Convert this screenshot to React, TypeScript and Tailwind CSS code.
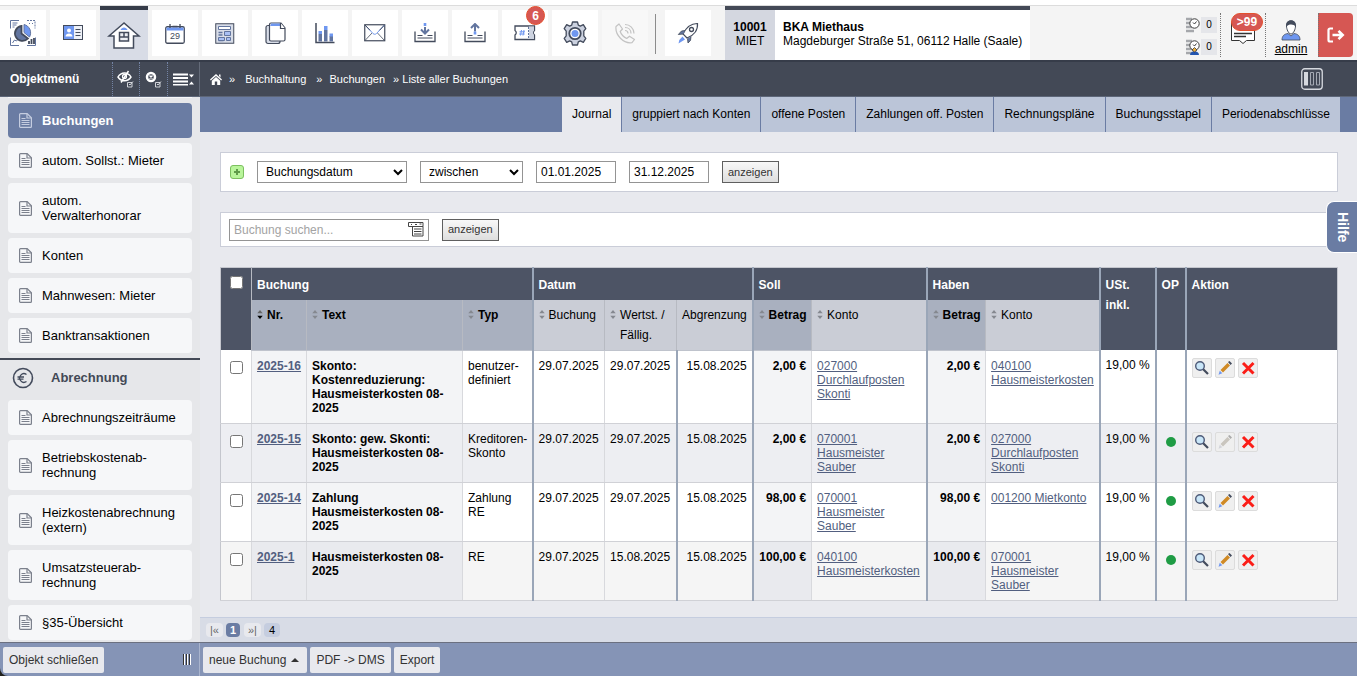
import type { ReactNode } from 'react';
import clsx from 'clsx';

const INK = '#434b5c';
const BLUE = '#6f97f0';
const STEEL = '#62759f';

/* ---------- Toolbar icons ---------- */

function DashboardIcon() {
  return (
    <svg width="26" height="26" viewBox="0 0 26 26" fill="none" stroke={STEEL} strokeWidth="1">
      <path d="M9 .5H.5v8M2.500 3h5M2.500 5h4M2.500 7h2" />
      <path d="M17 .5h8v8" strokeDasharray="2 1" />
      <path d="M19 3.500h1M22 3.500h1" />
      <path d="M.5 17.500v8H9M2.500 23l2-3 2 1 2-2.500" />
      <path d="M25.500 17.500v8H17" />
      <path d="M19 24v-3M21.500 24v-5M24 24v-6" stroke={INK} strokeWidth="1.800" />
      <path d="M11.500 6a7.500 7.500 0 1 0 6.500 12.500l-6.500-5z" fill={STEEL} stroke={INK} strokeWidth="1.800" />
      <path d="M14 4.500a8.500 8.500 0 0 1 5.500 12.500L14 12.500z" fill={BLUE} stroke={STEEL} />
    </svg>
  );
}

function CardIcon() {
  return (
    <svg width="20" height="16" viewBox="0 0 20 16" fill="none">
      <rect x=".5" y=".5" width="19" height="14" fill="#eef1f7" stroke={INK} />
      <rect x="1" y="1" width="10" height="13" fill={BLUE} />
      <circle cx="6" cy="5.500" r="2" fill="#fff" />
      <path d="M2.500 11.500c0-4 7-4 7 0z" fill="#fff" />
      <path d="M12.500 4.500h5M12.500 7.500h5M12.500 10.500h5" stroke={INK} />
    </svg>
  );
}

function HouseIcon() {
  return (
    <svg width="34" height="28" viewBox="0 0 34 28" fill="none" stroke={INK} strokeWidth="1.500">
      <path d="M17 2L2 15h5v12h19.500V15H32z" fill="#fff" />
      <path d="M13.500 9c1-3.500 6-3.500 7 0z" fill={BLUE} stroke="none" />
      <path d="M12.500 11.500h9v8.500h-9zM17 11.500V16M12.500 16h9" fill="#eceef4" />
    </svg>
  );
}

function CalendarIcon() {
  return (
    <svg width="20" height="21" viewBox="0 0 20 21" fill="none">
      <rect x=".75" y="3.750" width="18.500" height="16.500" rx="1.500" fill="#fff" stroke={INK} strokeWidth="1.300" />
      <path d="M1.500 4.500h17v3h-17z" fill={BLUE} />
      <path d="M5 1v4M15 1v4M7.500 3.500h5" stroke={INK} strokeWidth="1.300" />
      <text x="10" y="16" textAnchor="middle" fontSize="9" fill={INK} fontFamily="Liberation Sans, sans-serif">29</text>
    </svg>
  );
}

function FormIcon() {
  return (
    <svg width="20" height="21" viewBox="0 0 20 21" fill="none" stroke={STEEL}>
      <rect x=".75" y=".75" width="18" height="19.500" fill="#d8dde8" stroke={INK} />
      <path d="M3.500 3.500h12v3h-12z" fill="#fff" />
      <path d="M3.500 9.500h4M3.500 12h4M3.500 17.500h5" strokeWidth="1.500" />
      <path d="M9.500 8.500h6v4h-6zM3.500 14.500h6v3h-6zM11.500 14.500h4v3h-4z" fill="#a9c0f4" />
    </svg>
  );
}

function CopyIcon() {
  return (
    <svg width="21" height="23" viewBox="0 0 21 23" fill="none" stroke={INK} strokeWidth="1.200">
      <rect x="1" y="3.500" width="14" height="18" rx="2" fill="#d8dde8" />
      <path d="M6 1h10l4 5v11.500a1.500 1.500 0 0 1-1.500 1.500H6a1.500 1.500 0 0 1-1.500-1.500V2.500A1.500 1.500 0 0 1 6 1z" fill="#fff" />
      <path d="M6 1.500h9v2.500H5.200z" fill={BLUE} stroke="none" />
      <path d="M15.500 1v5.500h4.500" fill="#fff" />
    </svg>
  );
}

function ChartIcon() {
  return (
    <svg width="20" height="21" viewBox="0 0 20 21" fill="none">
      <path d="M1 0v19.500h18.500" stroke={INK} strokeWidth="1.500" />
      <path d="M3.500 11h3.500v7.500H3.500zM9 7h3.500v11.500H9zM14.500 13H18v5.500h-3.500z" fill={STEEL} />
      <path d="M3.500 8h3.500v3H3.500zM9 3h3.500v4H9zM14.500 10.500H18v3h-3.500z" fill={BLUE} />
    </svg>
  );
}

function MailIcon() {
  return (
    <svg width="22" height="18" viewBox="0 0 22 18" fill="none" stroke={INK}>
      <rect x=".75" y=".75" width="20" height="16" fill="#fff" strokeWidth="1.200" />
      <path d="M1 16.500l7-7.500M20.500 16.500L13.500 9" strokeWidth=".8" />
      <path d="M1 1l8 8.500c1 1 2.500 1 3.500 0L20.500 1" stroke={BLUE} />
      <path d="M1 1l5 5.300M20.500 1l-5 5.300" />
    </svg>
  );
}

function TrayIcon({ up }: { up?: boolean }) {
  return (
    <svg width="22" height="20" viewBox="0 0 22 20" fill="none">
      <path d="M1 8.500v10h20v-10" stroke={INK} strokeWidth="1.300" />
      <path d="M3.500 12.500h5M13.500 12.500h5M3.500 15h15" stroke={INK} />
      {up ? (
        <>
          <path d="M11 8.500V1.500M7 5l4-4 4 4" stroke={STEEL} strokeWidth="2" />
          <path d="M9.700 8.500h2.600v3H9.700z" fill={BLUE} />
        </>
      ) : (
        <>
          <path d="M11 4v6M7 6.500l4 4 4-4" stroke={STEEL} strokeWidth="2" />
          <path d="M9.700 0h2.600v3H9.700z" fill={BLUE} />
        </>
      )}
    </svg>
  );
}

function TicketIcon() {
  return (
    <svg width="22" height="16" viewBox="0 0 22 16" fill="none">
      <path d="M1 1h19.500v4.500q-2.500 2 0 4.500v4.500H1V10q2.500-2.500 0-4.500z" fill="#fff" stroke={INK} strokeWidth="1.300" />
      <path d="M15 1.500h5v4q-2 2 0 4.500v4h-5z" fill="#cdd3e0" />
      <path d="M14.500 2v12" stroke={STEEL} strokeDasharray="2 1" />
      <path d="M7.500 5l-1 5.500M10 5L9 10.500M5.500 6.800H11M5.200 9h5.500" stroke={BLUE} />
    </svg>
  );
}

function GearIcon() {
  return (
    <svg width="24" height="25" viewBox="0 0 24 25" fill="none" stroke={INK}>
      <path
        d="M9.500 1h5l.8 3.200 2 .9 3-1.400 2.500 4-2 2.500v4.600l2 2.500-2.500 4-3-1.400-2 .9-.8 3.200h-5l-.8-3.200-2-.9-3 1.400-2.500-4 2-2.500v-4.600l-2-2.500 2.500-4 3 1.400 2-.9z"
        fill="#cbd1df"
        strokeWidth="1.300"
        strokeLinejoin="round"
      />
      <circle cx="12" cy="12.500" r="5.700" fill="#fff" strokeWidth="1.800" />
      <circle cx="12" cy="12.500" r="3.500" fill={BLUE} stroke="none" />
    </svg>
  );
}

function PhoneIcon() {
  return (
    <svg width="21" height="21" viewBox="0 0 21 21" fill="none" stroke="#c3c3c3" strokeWidth="1.200">
      <path d="M1 3.500L4 1l3.500 5-2.300 2.500c1 3 3.500 5.500 6.500 7l2.800-2.300 5 3.300-2.500 3.200C8.500 21 0 12 1 3.500z" strokeLinejoin="round" />
      <path d="M10 1.500c5 0 9 4 9 9M10 4.500c3.500 0 6 2.500 6 6M10 7.500c2 0 3 1 3 3" />
    </svg>
  );
}

function RocketIcon() {
  return (
    <svg width="22" height="23" viewBox="0 0 22 23" fill="none" stroke={INK}>
      <path d="M20.500 1.500c-6-.2-10.500 2.500-14.500 10.500l4 4C17 13.500 21 8 20.500 1.500z" fill="#fff" strokeWidth="1.200" />
      <path d="M8 8.500L4.500 9 1.300 12.500l5-.5M14 14.500l-.5 4-2.500 2.500-.5-4.500" fill={STEEL} strokeWidth=".8" />
      <circle cx="14.500" cy="7.500" r="2" strokeWidth="1.300" />
      <path d="M5.500 14.500l2.500 3-2.500 1.500-4 2.500.8-3.500z" fill={BLUE} stroke="none" />
    </svg>
  );
}

function ClockIcon({ user }: { user?: boolean }) {
  return (
    <svg width="14" height="16" viewBox="0 0 14 16" fill="none" stroke="#3a3a3a">
      <path d="M0 2h6M0 6h5M0 10h6M0 14h8" stroke="#a5a7ab" strokeWidth="2.500" />
      <circle cx="8.500" cy="6.500" r="4.700" fill="#fff" />
      <path d="M8.500 7l2-2.500M8.500 7L7 5.500" />
      {user && (
        <>
          <path d="M4 16c0-5 9-5 9 0z" fill="#2456b0" stroke="none" />
          <path d="M6 11l2.500-2.500L11 11l-2.500 2z" fill="#f0b13c" strokeWidth=".8" />
        </>
      )}
    </svg>
  );
}

function UserIcon() {
  return (
    <svg width="20" height="21" viewBox="0 0 20 21" fill="none">
      <path d="M1 20c0-4 2-6 6-6.500l3 2.500 3-2.500c4 .5 6 2.500 6 6.500z" fill={BLUE} stroke={INK} strokeWidth=".8" />
      <path d="M5.500 6c0-3 2-5 4.500-5s4.500 2 4.500 5-2 8-4.500 8-4.500-5-4.500-8z" fill="#fff" stroke={INK} />
      <path d="M5.300 6.500C4.500 2.500 7 .3 10 .3s5.500 2.200 4.700 6.200C13 4 8 3.500 5.300 6.500z" fill={INK} />
    </svg>
  );
}

/* ---------- Small icons ---------- */

function DocIcon({ className }: { className?: string }) {
  return (
    <svg width="13" height="15" viewBox="0 0 13 15" fill="none" stroke="currentColor" className={clsx('shrink-0', className)}>
      <path d="M1.500.6h6.700l4.200 4.200v8.700a.9.900 0 0 1-.9.900h-10a.9.900 0 0 1-.9-.9V1.500a.9.900 0 0 1 .9-.9z" strokeWidth="1.200" />
      <path d="M8 1v4h4" strokeWidth="1.200" />
      <path d="M2.500 5.500h4M2.500 7.500h8M2.500 9.500h8M2.500 11.500h8" strokeWidth="1.200" />
    </svg>
  );
}

function SortIcon({ active }: { active?: boolean }) {
  return (
    <svg width="6" height="9" viewBox="0 0 6 9" className="mt-[5px] shrink-0">
      <path d="M3 0l2.700 3.200H.3z" fill={active ? '#666' : '#85888f'} />
      <path d="M3 9L.3 5.800h5.400z" fill={active ? '#000' : '#85888f'} />
    </svg>
  );
}

function SearchIcon() {
  return (
    <svg width="16" height="16" viewBox="0 0 16 16" fill="none">
      <path d="M8.500 8.500l5.500 5.500" stroke={INK} strokeWidth="2.200" />
      <circle cx="6" cy="6" r="4.300" fill="#c9e6f8" stroke="#4d5a78" strokeWidth="1.400" />
    </svg>
  );
}

function PencilIcon({ off }: { off?: boolean }) {
  return (
    <svg width="16" height="16" viewBox="0 0 16 16">
      <path d="M10.500 3l2.500 2.500-7 7L3.500 10z" fill={off ? '#c9c5be' : '#d08a25'} />
      <path d="M11 2l1.500-1 2.500 2.500-1.500 1.500z" fill={off ? '#aaa' : INK} />
      <path d="M2.800 10.700l2.500 2.500-3.800 1.500z" fill={off ? '#d2d4da' : BLUE} />
    </svg>
  );
}

function DeleteIcon() {
  return (
    <svg width="16" height="16" viewBox="0 0 16 16" stroke="#fb1d17" strokeWidth="3">
      <path d="M3 3l10.500 10.500M13.500 3L3 13.500" />
    </svg>
  );
}

/* ---------- Data ---------- */

const tools: { label: string; icon: ReactNode; active?: boolean; badge?: string; off?: boolean }[] = [
  { label: 'Übersicht', icon: <DashboardIcon /> },
  { label: 'Kontakte', icon: <CardIcon /> },
  { label: 'Objekte', icon: <HouseIcon />, active: true },
  { label: 'Kalender', icon: <CalendarIcon /> },
  { label: 'Formulare', icon: <FormIcon /> },
  { label: 'Dokumente', icon: <CopyIcon /> },
  { label: 'Auswertungen', icon: <ChartIcon /> },
  { label: 'E-Mail', icon: <MailIcon /> },
  { label: 'Eingang', icon: <TrayIcon /> },
  { label: 'Ausgang', icon: <TrayIcon up /> },
  { label: 'Tickets', icon: <TicketIcon />, badge: '6' },
  { label: 'Einstellungen', icon: <GearIcon /> },
  { label: 'Telefon', icon: <PhoneIcon />, off: true },
];

const bookingMenu = [
  'Buchungen',
  'autom. Sollst.: Mieter',
  'autom. Verwalterhonorar',
  'Konten',
  'Mahnwesen: Mieter',
  'Banktransaktionen',
];

const billingMenu = [
  'Abrechnungszeiträume',
  'Betriebskostenab-rechnung',
  'Heizkostenabrechnung (extern)',
  'Umsatzsteuerab-rechnung',
  '§35-Übersicht',
];

const tabs = [
  'Journal',
  'gruppiert nach Konten',
  'offene Posten',
  'Zahlungen off. Posten',
  'Rechnungspläne',
  'Buchungsstapel',
  'Periodenabschlüsse',
];

const rows = [
  { nr: '2025-16', text: 'Skonto: Kostenreduzierung: Hausmeisterkosten 08-2025', typ: 'benutzer-definiert', due: '29.07.2025', amount: '2,00 €', soll: '027000 Durchlaufposten Skonti', haben: '040100 Hausmeisterkosten', op: false, edit: true, base: 'bg-white', tint: 'bg-[#f3f4f6]' },
  { nr: '2025-15', text: 'Skonto: gew. Skonti: Hausmeisterkosten 08-2025', typ: 'Kreditoren-Skonto', due: '29.07.2025', amount: '2,00 €', soll: '070001 Hausmeister Sauber', haben: '027000 Durchlaufposten Skonti', op: true, edit: false, base: 'bg-[#edeef2]', tint: 'bg-[#edeef2]' },
  { nr: '2025-14', text: 'Zahlung Hausmeisterkosten 08-2025', typ: 'Zahlung RE', due: '29.07.2025', amount: '98,00 €', soll: '070001 Hausmeister Sauber', haben: '001200 Mietkonto', op: true, edit: true, base: 'bg-white', tint: 'bg-[#f3f4f6]' },
  { nr: '2025-1', text: 'Hausmeisterkosten 08-2025', typ: 'RE', due: '15.08.2025', amount: '100,00 €', soll: '040100 Hausmeisterkosten', haben: '070001 Hausmeister Sauber', op: true, edit: true, base: 'bg-[#f5f5f5]', tint: 'bg-[#e9eaee]' },
];

/* ---------- Parts ---------- */

function MenuItem({ label, active }: { label: string; active?: boolean }) {
  return (
    <a
      href="#"
      className={clsx(
        'mx-2 flex items-center gap-2.5 rounded py-2.5 pl-[11px] pr-3 text-[13px] leading-[15px]',
        active ? 'bg-[#6a7ca3] font-bold text-white' : 'bg-[#f6f7f9] text-black',
      )}
    >
      <DocIcon className={active ? 'text-[#c5cde0]' : 'text-[#7b808c]'} />
      <span className="min-w-0">{label}</span>
    </a>
  );
}

function ShowButton() {
  return (
    <button className="h-[22px] border border-[#5f5f5f] bg-linear-to-b from-[#f8f8f8] to-[#dedede] px-[5px] text-[11px] text-[#333]">
      anzeigen
    </button>
  );
}

function SubHead({ children, bold, thick, sort = true, active }: { children: ReactNode; bold?: boolean; thick?: boolean; sort?: boolean; active?: boolean }) {
  return (
    <th
      className={clsx(
        'border-b border-b-[#bfc3cc] px-[5px] pb-1 pt-[5px] text-left align-top leading-5 text-black',
        thick ? 'border-l-2 border-l-[#9aa6b8]' : 'border-l border-l-[#b7bac2]',
        bold ? 'bg-[#a9b0bf] font-bold' : 'bg-[#cacdd6] font-normal',
      )}
    >
      <span className="flex gap-1">
        {sort && <SortIcon active={active} />}
        <span>{children}</span>
      </span>
    </th>
  );
}

function FooterButton({ children }: { children: ReactNode }) {
  return <button className="flex h-[26px] items-center rounded-xs bg-[#e8e9ee] px-1.5 text-xs text-[#333]">{children}</button>;
}

const groupHead = 'border-l-2 border-[#9aa6b8] px-[5px] pb-[5px] pt-[7px] text-left align-top font-bold leading-5';
const cell = 'border-b border-b-[#d0d1d6] px-[5px] py-2 align-top';
const thin = 'border-l border-l-[#d8d9dd]';
const thick = 'border-l-2 border-l-[#9aa6b8]';
const accountLink = 'text-[#525f80] underline underline-offset-1';
const action = 'flex h-5 w-5 items-center justify-center rounded-xs border border-[#dcdcdc] bg-[#efefef]';

export default function App() {
  return (
    <div className="flex h-screen flex-col overflow-hidden bg-[#22221c] font-['Liberation_Sans',Arial,sans-serif] text-xs text-black">
      {/* Toolbar */}
      <header className="shrink-0 border-t-[5px] border-white">
        <div className="flex h-[55px] border-t border-[#dcdcdc] bg-[#f4f4f4]">
          <nav className="flex gap-1">
            {tools.map((t) => (
              <a
                key={t.label}
                href="#"
                aria-label={t.label}
                className={clsx(
                  'relative flex items-center justify-center',
                  t.active ? 'w-12 border-t-4 border-[#363c49] bg-[#d8dce6]' : 'my-1 w-[46px]',
                  !t.active && (t.off ? 'bg-[#f8f8f8]' : 'bg-white'),
                )}
              >
                {t.icon}
                {t.badge && (
                  <span className="absolute -top-1 right-[3px] flex h-[19px] w-[19px] items-center justify-center rounded-full border border-[#e4502e] bg-[#d65753] font-bold text-white">
                    {t.badge}
                  </span>
                )}
              </a>
            ))}
          </nav>
          <div className="ml-[7px] mt-2 h-10 w-px bg-[#8c8c8c]" />
          <a href="#" aria-label="Start" className="my-1 ml-[9px] flex w-[46px] items-center justify-center bg-white">
            <RocketIcon />
          </a>
          <div className="ml-3.5 flex border-t-4 border-[#434956] bg-white leading-[14px]">
            <div className="w-[50px] bg-[#d4d7e0] pt-2.5 text-center">
              <b>10001</b>
              <br />
              MIET
            </div>
            <div className="whitespace-nowrap px-2 pt-2.5">
              <b>BKA Miethaus</b>
              <br />
              Magdeburger Straße 51, 06112 Halle (Saale)
            </div>
          </div>
          <div className="ml-auto mr-1 mt-[7px] flex h-11">
            <div className="flex flex-col justify-between pb-0.5 pr-[3px] pt-1">
              {[false, true].map((user) => (
                <div key={String(user)} className="flex items-center gap-px">
                  <ClockIcon user={user} />
                  <span className="flex h-4 w-4 items-center justify-center bg-[#e5e6ea] text-[10px]">0</span>
                </div>
              ))}
            </div>
            <a href="#" aria-label="Nachrichten" className="relative flex w-[45px] justify-center border-l border-dotted border-[#777] pt-2">
              <svg width="24" height="24" viewBox="0 0 24 24" fill="#fff" stroke="#333">
                <path d="M.5 1.500h23v18h-8l-3.500 3-3.500-3h-8z" />
                <path d="M3 12.500h18M3 15.500h12" strokeWidth="1.300" />
              </svg>
              <span className="absolute left-2.5 top-0 flex h-[18px] w-8 items-center justify-center rounded-full border border-[#e4502e] bg-[#d65753] font-bold text-white">
                &gt;99
              </span>
            </a>
            <a href="#" className="flex w-[53px] flex-col items-center gap-px border-l border-dotted border-[#777] pr-0.5 pt-[7px] leading-[14px] underline">
              <UserIcon />
              admin
            </a>
            <button aria-label="Abmelden" className="flex w-[35px] items-center justify-center rounded-r-sm border-l border-dotted border-[#777] bg-[#d65753]">
              <svg width="18" height="16" viewBox="0 0 18 16" fill="none" stroke="#fff" strokeWidth="2.200">
                <path d="M6 1.500H3A1.500 1.500 0 0 0 1.500 3v10A1.500 1.500 0 0 0 3 14.500h3" />
                <path d="M5.500 8h10M11.500 3.800L15.700 8l-4.200 4.200" strokeWidth="2.600" />
              </svg>
            </button>
          </div>
        </div>
      </header>

      {/* Breadcrumb bar */}
      <div className="flex h-[37px] shrink-0 border-b border-t-2 border-b-[#5d6678] border-t-[#363c49] bg-[#434956] text-white">
        <div className="flex w-[200px] items-stretch border-r border-[#646b79]">
          <h1 className="flex flex-1 items-center pl-2.5 text-xs font-bold">Objektmenü</h1>
          <button aria-label="Ausblenden" className="flex w-[27px] items-center justify-center border-l border-dotted border-[#7484a5]">
            <svg width="18" height="18" viewBox="0 0 18 18" fill="none" stroke="#fff">
              <path d="M1 7C4 1.500 11 1.500 14 7 11 12 4 12 1 7zM11.500 1L4 12.500" strokeWidth="1.500" />
              <circle cx="7.500" cy="6.500" r="2" strokeWidth="1.300" />
              <path d="M10.500 12.500h4.500v4.500h-4.500zM12 14l1 1 3-3.500" stroke="#dfe1e5" strokeWidth=".9" />
            </svg>
          </button>
          <button aria-label="Zurücksetzen" className="flex w-7 items-center justify-center border-l border-dotted border-[#7484a5]">
            <svg width="18" height="18" viewBox="0 0 18 18" fill="none" stroke="#fff">
              <circle cx="6" cy="7" r="4" strokeWidth="2.500" />
              <path d="M4.500 5.500l3 3M7.500 5.500l-3 3" strokeWidth="1.400" />
              <path d="M10.500 12.500h4.500v4.500h-4.500zM12 14l1 1 3-3.500" stroke="#dfe1e5" strokeWidth=".9" />
            </svg>
          </button>
          <button aria-label="Menü" className="flex w-8 items-center justify-center border-l border-dotted border-[#7484a5]">
            <svg width="22" height="14" viewBox="0 0 22 14" fill="#fff">
              <path d="M0 1.500h15v2H0zM0 5h15v2H0zM0 8.500h15v2H0zM0 12h15v1.500H0zM16 2.500h5L18.500 5.500zM16 12.500h5L18.500 9.500z" />
            </svg>
          </button>
        </div>
        <nav className="flex items-center pl-2.5 text-[11px]">
          <svg width="12" height="11" viewBox="0 0 12 11" fill="#fff" className="mr-[7px]">
            <path d="M6 0l6 5.500-.8 1L6 1.900.8 6.500 0 5.500zM6 3l4.200 3.700V11H7.200V7.500H4.800V11h-3V6.700zM9 .5h1.500v3L9 2z" />
          </svg>
          <span className="mr-2.5">»</span>
          <a href="#" className="mr-2.5">Buchhaltung</a>
          <span className="mr-[7px]">»</span>
          <a href="#" className="mr-2">Buchungen</a>
          <span>» Liste aller Buchungen</span>
        </nav>
        <button aria-label="Spalten" className="ml-auto mr-[34px] self-center">
          <svg width="22" height="22" viewBox="0 0 22 22" fill="none" stroke="#d6d9df">
            <rect x=".75" y=".75" width="20.500" height="20.500" rx="3" strokeWidth="1.300" />
            <path d="M3 4h4v13.500H3z" fill="#d6d9df" stroke="none" />
            <path d="M9.500 4.500h3v12.500h-3zM15.500 4.500h3v12.500h-3z" stroke="#a4a9b3" />
          </svg>
        </button>
      </div>

      <div className="flex min-h-0 flex-1">
        {/* Sidebar */}
        <aside className="flex w-[200px] shrink-0 flex-col gap-[5px] overflow-hidden bg-[#e6e7ea]">
          <div className="mx-2 h-px shrink-0 bg-[#f6f7f9]" />
          {bookingMenu.map((label, i) => (
            <MenuItem key={label} label={label} active={i === 0} />
          ))}
          <h2 className="flex h-[37px] shrink-0 items-center gap-[17px] border-t-2 border-[#434956] pl-3 text-[13px] font-bold text-[#434956]">
            <svg width="22" height="22" viewBox="0 0 22 22" fill="none" stroke={INK}>
              <circle cx="11" cy="11" r="9.500" strokeWidth="1.600" />
              <path d="M14.500 7.500a4.300 4.300 0 1 0 0 7M5.500 10h6.500M5.500 12.200h6" strokeWidth="1.300" />
            </svg>
            Abrechnung
          </h2>
          {billingMenu.map((label) => (
            <MenuItem key={label} label={label} />
          ))}
        </aside>

        {/* Main area */}
        <div className="flex min-w-0 flex-1 flex-col bg-[#e8e9ee]">
          <nav className="flex h-[35px] shrink-0 justify-end bg-[#6a7ca3] pr-[17px]">
            {tabs.map((tab, i) => (
              <a
                key={tab}
                href="#"
                className={clsx(
                  'flex items-center whitespace-nowrap px-2.5 pb-0.5',
                  i === 0 ? 'bg-[#e8e9ee]' : 'border-l border-[#6a7ca3] bg-[#bbc5d8]',
                )}
              >
                {tab}
              </a>
            ))}
          </nav>

          <main className="flex min-h-0 flex-1 flex-col gap-5 overflow-hidden pl-5 pr-[19px] pt-5">
            <form className="flex h-10 shrink-0 items-center gap-[13px] border border-[#cacdd8] bg-white pl-[9px]">
              <button type="button" aria-label="Filter hinzufügen" className="flex h-3.5 w-3.5 items-center justify-center rounded-[3px] border border-[#7cc05f] bg-[#b9f59b]">
                <svg width="8" height="8" viewBox="0 0 8 8" stroke="#5f9c49" strokeWidth="2">
                  <path d="M4 1v6M1 4h6" />
                </svg>
              </button>
              <select aria-label="Feld" defaultValue="Buchungsdatum" className="h-[22px] w-[150px] border border-[#949494] bg-white pl-1">
                <option>Buchungsdatum</option>
              </select>
              <select aria-label="Vergleich" defaultValue="zwischen" className="h-[22px] w-[103px] border border-[#949494] bg-white pl-1">
                <option>zwischen</option>
              </select>
              <input aria-label="von" defaultValue="01.01.2025" className="h-[22px] w-20 border border-[#949494] bg-white px-1" />
              <input aria-label="bis" defaultValue="31.12.2025" className="h-[22px] w-20 border border-[#949494] bg-white px-1" />
              <ShowButton />
            </form>

            <form className="flex h-[35px] shrink-0 items-center gap-[13px] border border-[#cacdd8] bg-white pl-2">
              <div className="flex h-[22px] w-[200px] items-center border border-[#949494] pr-1">
                <input aria-label="Buchung suchen" placeholder="Buchung suchen..." className="min-w-0 flex-1 bg-transparent px-1 outline-none placeholder:text-[#a3a3a3]" />
                <svg width="16" height="15" viewBox="0 0 16 15" fill="none" stroke="#444">
                  <path d="M.5.500h14.500v4H.500zM4.500 4.500H15v9.500H4.500z" />
                  <path d="M6 7h7.500M6 9.500h7.500M6 12h7.500M3 2.500h1M7 2.500h2M11.500 2h2" />
                </svg>
              </div>
              <ShowButton />
            </form>

            <table className="w-full table-fixed border-collapse border border-[#c4c6cd]">
              <colgroup>
                <col className="w-[31px]" />
                <col className="w-[55px]" />
                <col className="w-[156px]" />
                <col className="w-[70px]" />
                <col className="w-[72px]" />
                <col className="w-[72px]" />
                <col className="w-[76px]" />
                <col className="w-[59px]" />
                <col className="w-[115px]" />
                <col className="w-[59px]" />
                <col className="w-[114px]" />
                <col className="w-[56px]" />
                <col className="w-[30px]" />
                <col />
              </colgroup>
              <thead className="bg-[#4d5465] text-white">
                <tr className="h-8">
                  <th rowSpan={2} className="pt-2 align-top">
                    <input type="checkbox" aria-label="Alle auswählen" className="mx-auto block h-[13px] w-[13px]" />
                  </th>
                  <th colSpan={3} className="border-l border-[#b7bac2] px-[5px] pb-[5px] pt-[7px] text-left align-top font-bold leading-5">Buchung</th>
                  <th colSpan={3} className={groupHead}>Datum</th>
                  <th colSpan={2} className={groupHead}>Soll</th>
                  <th colSpan={2} className={groupHead}>Haben</th>
                  <th rowSpan={2} className={groupHead}>USt. inkl.</th>
                  <th rowSpan={2} className={groupHead}>OP</th>
                  <th rowSpan={2} className={groupHead}>Aktion</th>
                </tr>
                <tr className="h-[50px]">
                  <SubHead bold active>Nr.</SubHead>
                  <SubHead bold>Text</SubHead>
                  <SubHead bold>Typ</SubHead>
                  <SubHead thick>Buchung</SubHead>
                  <SubHead>Wertst. / Fällig.</SubHead>
                  <SubHead sort={false}>Abgrenzung</SubHead>
                  <SubHead bold thick>Betrag</SubHead>
                  <SubHead>Konto</SubHead>
                  <SubHead bold thick>Betrag</SubHead>
                  <SubHead>Konto</SubHead>
                </tr>
              </thead>
              <tbody className="leading-[14px]">
                {rows.map((r) => (
                  <tr key={r.nr} className={r.base}>
                    <td className={clsx(cell, 'pt-[11px]')}>
                      <input type="checkbox" aria-label={r.nr} className="mx-auto block h-[13px] w-[13px]" />
                    </td>
                    <td className={clsx(cell, thin, r.tint, 'whitespace-nowrap font-bold')}>
                      <a href="#" className={accountLink}>{r.nr}</a>
                    </td>
                    <td className={clsx(cell, thin, r.tint, 'font-bold')}>{r.text}</td>
                    <td className={clsx(cell, thin)}>{r.typ}</td>
                    <td className={clsx(cell, thick, 'whitespace-nowrap')}>29.07.2025</td>
                    <td className={clsx(cell, thin, 'whitespace-nowrap')}>{r.due}</td>
                    <td className={clsx(cell, thick, 'whitespace-nowrap text-right')}>15.08.2025</td>
                    <td className={clsx(cell, thick, r.tint, 'whitespace-nowrap text-right font-bold')}>{r.amount}</td>
                    <td className={clsx(cell, thin)}>
                      <a href="#" className={accountLink}>{r.soll}</a>
                    </td>
                    <td className={clsx(cell, thick, r.tint, 'whitespace-nowrap text-right font-bold')}>{r.amount}</td>
                    <td className={clsx(cell, thin)}>
                      <a href="#" className={accountLink}>{r.haben}</a>
                    </td>
                    <td className={clsx(cell, thick, 'whitespace-nowrap')}>19,00 %</td>
                    <td className={clsx(cell, thick, 'pt-3')}>
                      {r.op && <span className="mx-auto mt-px block h-2.5 w-2.5 rounded-full bg-[#1f9c45]" />}
                    </td>
                    <td className={clsx(cell, thick)}>
                      <div className="flex gap-[3px]">
                        <button aria-label="Ansehen" className={action}><SearchIcon /></button>
                        <button aria-label="Bearbeiten" disabled={!r.edit} className={action}><PencilIcon off={!r.edit} /></button>
                        <button aria-label="Löschen" className={action}><DeleteIcon /></button>
                      </div>
                    </td>
                  </tr>
                ))}
              </tbody>
            </table>
          </main>

          {/* Pager */}
          <div className="flex h-[25px] shrink-0 items-center gap-[3px] border-t border-[#c5cddf] bg-[#d8dce6] pl-1.5 text-[11px] leading-[14px]">
            <button className="w-[17px] rounded-sm bg-[#e8e9ee] text-[#666]">|«</button>
            <button className="w-3.5 rounded-sm bg-[#6a7ca3] font-bold text-white">1</button>
            <button className="ml-px w-[17px] rounded-sm bg-[#e8e9ee] text-[#666]">»|</button>
            <span className="w-4 rounded-sm bg-[#c5cddf] text-center">4</span>
          </div>
        </div>
      </div>

      {/* Footer */}
      <footer className="flex h-[34px] shrink-0 items-center rounded-bl-lg border-t border-[#6b7080] bg-[#8594b6]">
        <div className="flex h-full w-[200px] items-center justify-between border-r border-[#a9b4cd] pl-[3px] pr-2">
          <FooterButton>Objekt schließen</FooterButton>
          <svg width="8" height="11" viewBox="0 0 8 11" strokeWidth="1">
            <path d="M.5 0v11M3.500 0v11M6.500 0v11" stroke="#333" />
            <path d="M1.500 0v11M4.500 0v11M7.500 0v11" stroke="#fff" />
          </svg>
        </div>
        <div className="flex gap-[3px] pl-[3px]">
          <FooterButton>
            neue Buchung
            <svg width="8" height="4" viewBox="0 0 8 4" fill="#333" className="ml-[5px] mr-0.5">
              <path d="M4 0l4 4H0z" />
            </svg>
          </FooterButton>
          <FooterButton>PDF -&gt; DMS</FooterButton>
          <FooterButton>Export</FooterButton>
        </div>
      </footer>

      {/* Help tab at the window edge */}
      <button className="fixed right-0 top-[201px] flex h-[52px] w-[31px] items-center justify-center rounded-l-lg border border-r-0 border-white bg-[#6a7ca3] pl-0.5 text-sm font-bold text-white [writing-mode:vertical-rl]">
        Hilfe
      </button>
    </div>
  );
}
